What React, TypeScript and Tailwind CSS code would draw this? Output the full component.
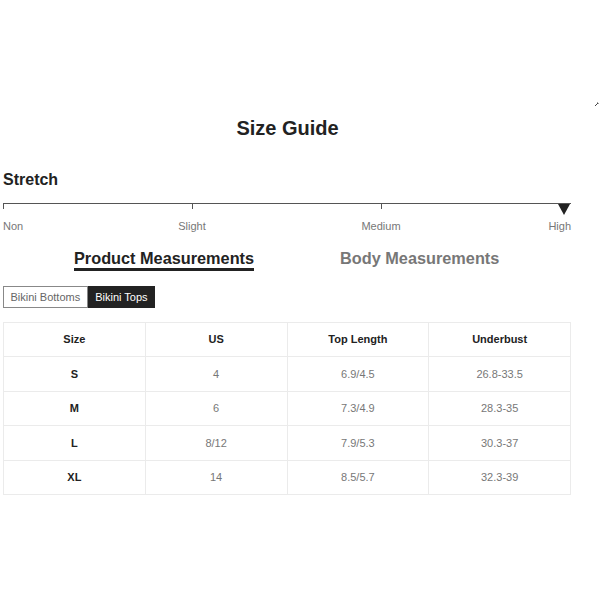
const rows = [
  { size: "S", us: "4", top: "6.9/4.5", under: "26.8-33.5" },
  { size: "M", us: "6", top: "7.3/4.9", under: "28.3-35" },
  { size: "L", us: "8/12", top: "7.9/5.3", under: "30.3-37" },
  { size: "XL", us: "14", top: "8.5/5.7", under: "32.3-39" },
];

const stops = ["Non", "Slight", "Medium", "High"];

export default function App() {
  return (
    <div className="relative w-[600px] h-[600px] bg-white font-['Liberation_Sans',Arial,sans-serif] text-[#222]">
      <svg className="absolute left-[594px] top-[101px]" width="6" height="6" viewBox="0 0 6 6">
        <path d="M1 5 L4 2 M3 2 L4 2 L4 3" stroke="#444" strokeWidth="1" fill="none" />
      </svg>

      <div className="w-[568px] ml-[3px] pt-[116px]">
        <h1 className="text-center text-[20px] leading-[24px] font-bold pl-[1px]">Size Guide</h1>

        <h2 className="mt-[30px] text-[16px] leading-[20px] font-bold">Stretch</h2>

        {/* stretch scale */}
        <div className="relative mt-[13px] h-[12px] border-t border-[#555]">
          <span className="absolute left-0 top-0 h-[5px] w-px bg-[#555]" />
          <span className="absolute left-[189px] top-0 h-[5px] w-px bg-[#555]" />
          <span className="absolute left-[378px] top-0 h-[5px] w-px bg-[#555]" />
          <svg className="absolute left-[555px] top-[0px]" width="12" height="11" viewBox="0 0 12 11">
            <path d="M0 0 L12 0 L6 11 Z" fill="#222" />
          </svg>
        </div>
        <div className="relative mt-[4px] h-[14px] text-[11px] leading-[14px] text-[#777]">
          <span className="absolute left-0">{stops[0]}</span>
          <span className="absolute left-[189px] -translate-x-1/2">{stops[1]}</span>
          <span className="absolute left-[378px] -translate-x-1/2">{stops[2]}</span>
          <span className="absolute right-0">{stops[3]}</span>
        </div>

        {/* tabs */}
        <div className="mt-[15px] flex items-start text-[16.3px] leading-[20px] font-bold">
          <div className="ml-[71px] border-b-[3px] border-[#222] pb-[0px]">Product Measurements</div>
          <div className="ml-[86px] text-[#777]">Body Measurements</div>
        </div>

        <div className="mt-[15px] flex text-[11px]">
          <button className="h-[22px] px-[6.5px] border border-[#888] text-[#666]">Bikini Bottoms</button>
          <button className="h-[22px] px-[6.5px] bg-[#222] text-white border border-[#222]">Bikini Tops</button>
        </div>

        <table className="mt-[14px] w-[568px] border-collapse table-fixed text-[11px]">
          <thead>
            <tr className="h-[34px]">
              {["Size", "US", "Top Length", "Underbust"].map((h) => (
                <th key={h} className="border border-[#ebebeb] font-bold text-[#222] text-center">
                  {h}
                </th>
              ))}
            </tr>
          </thead>
          <tbody>
            {rows.map((r) => (
              <tr key={r.size} className="h-[34.6px]">
                <td className="border border-[#ebebeb] text-center font-bold text-[#222]">{r.size}</td>
                <td className="border border-[#ebebeb] text-center text-[#777]">{r.us}</td>
                <td className="border border-[#ebebeb] text-center text-[#777]">{r.top}</td>
                <td className="border border-[#ebebeb] text-center text-[#777]">{r.under}</td>
              </tr>
            ))}
          </tbody>
        </table>
      </div>
    </div>
  );
}
